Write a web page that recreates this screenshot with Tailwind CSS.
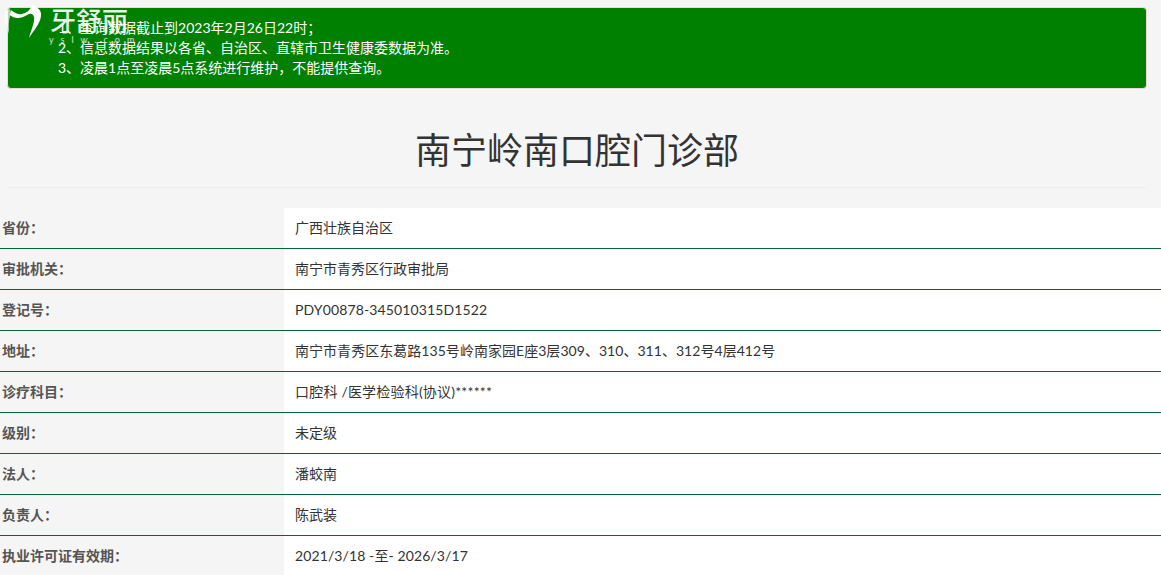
<!DOCTYPE html>
<html lang="zh-CN">
<head>
    <meta charset="UTF-8">
    <title>南宁岭南口腔门诊部</title>
    <script src="https://cdn.jsdelivr.net/npm/@tailwindcss/browser@4"></script>
</head>
<body class="bg-[#f5f5f5] text-[#333] font-['Lato','Noto_Sans_CJK_SC',sans-serif] text-sm overflow-hidden h-[575px]">
    <!-- Logo over the notice -->
    <div class="absolute left-0 top-0 w-[135px] h-[48px]">
        <svg width="45" height="42" viewBox="0 0 45 42" class="absolute left-0 top-0">
            <path d="M11 10 C14 12 17 15 22 14 C26 13 30 11 32 5 C38 7 42 11 41 16 C40 24 34 30 29 38 C31 30 35 22 34 17 C33 13 30 13 27 15 C21 19 14 19 10 15Z" fill="#ffffff"/>
            <path d="M10 9 C5 10 4 14 5 20 C6 25 8 30 9 34 C9 27 8 20 11 14Z" fill="#ffffff" fill-opacity="0.7"/>
        </svg>
        <div class="absolute left-[50px] top-[5px] text-white/90 font-['Noto_Sans_CJK_SC',serif] font-medium text-[26px] leading-[30px] whitespace-nowrap">牙舒丽</div>
        <div class="absolute left-[49px] top-[35px] text-white/80 text-[9px] leading-[10px] tracking-[7px] whitespace-nowrap">yslw.com</div>
    </div>

    <div class="ml-[7px] mr-[14px] mt-[7px] h-[82px] bg-[#008000] border border-[#f0d8d8] rounded-[4px] text-white pl-[50px] pt-[10px] leading-[20px]">
        <p>1、查询数据截止到2023年2月26日22时；</p>
        <p>2、信息数据结果以各省、自治区、直辖市卫生健康委数据为准。</p>
        <p>3、凌晨1点至凌晨5点系统进行维护，不能提供查询。</p>
    </div>

    <h1 class="mt-[41px] ml-[8px] mr-[15px] text-center text-[36px] leading-[40px] font-normal">南宁岭南口腔门诊部</h1>
    <hr class="ml-[8px] mr-[15px] mt-[17px] border-[#eeeeee]">

    <div class="mt-[20px]">
        <div class="flex h-[41px] border-b border-[#006633]">
            <div class="w-[284px] pl-[2px] font-bold text-[#555] flex items-center">省份：</div>
            <div class="flex-1 bg-white pl-[11px] flex items-center">广西壮族自治区</div>
        </div>
        <div class="flex h-[41px] border-b border-[#006633]">
            <div class="w-[284px] pl-[2px] font-bold text-[#555] flex items-center">审批机关：</div>
            <div class="flex-1 bg-white pl-[11px] flex items-center">南宁市青秀区行政审批局</div>
        </div>
        <div class="flex h-[41px] border-b border-[#006633]">
            <div class="w-[284px] pl-[2px] font-bold text-[#555] flex items-center">登记号：</div>
            <div class="flex-1 bg-white pl-[11px] flex items-center tracking-[0.13px]">PDY00878-345010315D1522</div>
        </div>
        <div class="flex h-[41px] border-b border-[#006633]">
            <div class="w-[284px] pl-[2px] font-bold text-[#555] flex items-center">地址：</div>
            <div class="flex-1 bg-white pl-[11px] flex items-center tracking-[0.04px]">南宁市青秀区东葛路135号岭南家园E座3层309、310、311、312号4层412号</div>
        </div>
        <div class="flex h-[41px] border-b border-[#006633]">
            <div class="w-[284px] pl-[2px] font-bold text-[#555] flex items-center">诊疗科目：</div>
            <div class="flex-1 bg-white pl-[11px] flex items-center tracking-[0.2px]">口腔科 /医学检验科(协议)******</div>
        </div>
        <div class="flex h-[41px] border-b border-[#006633]">
            <div class="w-[284px] pl-[2px] font-bold text-[#555] flex items-center">级别：</div>
            <div class="flex-1 bg-white pl-[11px] flex items-center">未定级</div>
        </div>
        <div class="flex h-[41px] border-b border-[#006633]">
            <div class="w-[284px] pl-[2px] font-bold text-[#555] flex items-center">法人：</div>
            <div class="flex-1 bg-white pl-[11px] flex items-center">潘蛟南</div>
        </div>
        <div class="flex h-[41px] border-b border-[#006633]">
            <div class="w-[284px] pl-[2px] font-bold text-[#555] flex items-center">负责人：</div>
            <div class="flex-1 bg-white pl-[11px] flex items-center">陈武装</div>
        </div>
        <div class="flex h-[41px] border-b border-[#006633]">
            <div class="w-[284px] pl-[2px] font-bold text-[#555] flex items-center">执业许可证有效期：</div>
            <div class="flex-1 bg-white pl-[11px] flex items-center tracking-[0.1px]">2021/3/18 -至- 2026/3/17</div>
        </div>
    </div>
</body>
</html>
